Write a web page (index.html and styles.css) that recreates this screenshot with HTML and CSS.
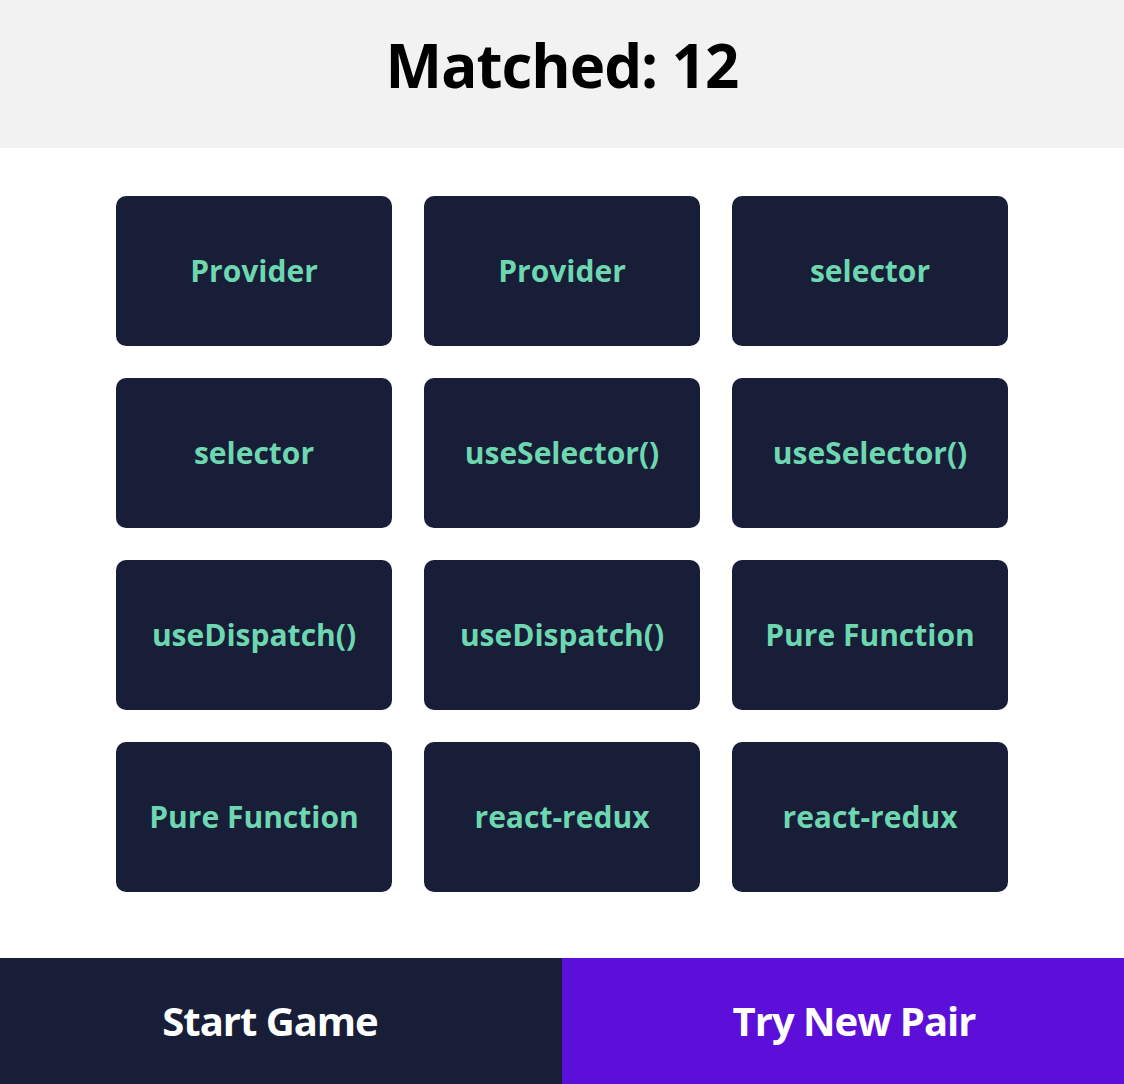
FILE: index.html
```html
<!DOCTYPE html>
<html>
<head>
<meta charset="utf-8">
<link rel="stylesheet" href="styles.css">
</head>
<body>
<header class="top">
  <h1 class="score">Matched: 12</h1>
</header>
<main class="board">
  <div class="card">Provider</div>
  <div class="card">Provider</div>
  <div class="card">selector</div>
  <div class="card">selector</div>
  <div class="card">useSelector()</div>
  <div class="card">useSelector()</div>
  <div class="card">useDispatch()</div>
  <div class="card">useDispatch()</div>
  <div class="card">Pure Function</div>
  <div class="card">Pure Function</div>
  <div class="card">react-redux</div>
  <div class="card">react-redux</div>
</main>
<footer class="controls">
  <button class="btn btn-start">Start Game</button>
  <button class="btn btn-new">Try New Pair</button>
</footer>
</body>
</html>
```
FILE: styles.css
```css
* { box-sizing: border-box; }
html, body {
  margin: 0;
  padding: 0;
  background: #ffffff;
  font-family: "Open Sans", "Noto Sans", sans-serif;
}
.top {
  height: 148px;
  background: #f2f2f2;
  display: flex;
  align-items: center;
  justify-content: center;
}
.score {
  margin: 0;
  font-size: 60px;
  font-weight: 700;
  color: #000;
  letter-spacing: -1px;
  line-height: 1;
  padding-bottom: 18px;
}
.board {
  display: grid;
  grid-template-columns: repeat(3, 276px);
  grid-auto-rows: 150px;
  gap: 32px;
  justify-content: center;
  padding: 48px 0 66px;
}
.card {
  background: #181d38;
  border-radius: 10px;
  color: #6dd7b0;
  font-size: 30px;
  font-weight: 700;
  letter-spacing: 0;
  display: flex;
  align-items: center;
  justify-content: center;
  padding-bottom: 2px;
}
.controls {
  display: flex;
  height: 126px;
}
.btn {
  flex: 0 0 50%;
  border: none;
  margin: 0;
  color: #ffffff;
  font-family: inherit;
  font-size: 40px;
  font-weight: 700;
  letter-spacing: -1px;
  padding: 0 0 2px;
}
.btn-start { background: #181d38; padding-right: 22px; }
.btn-new { background: #5c0fd9; padding-left: 22px; }
```
